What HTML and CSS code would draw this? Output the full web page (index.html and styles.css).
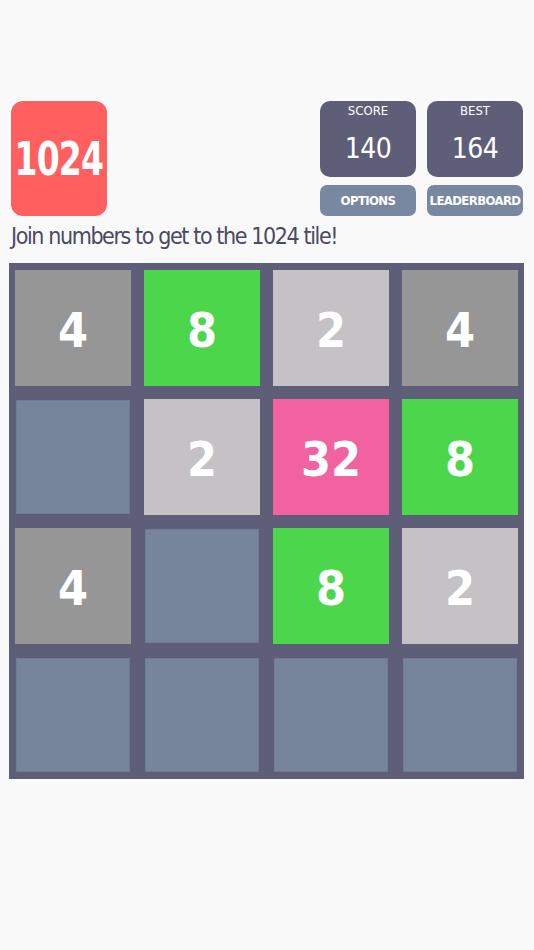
FILE: index.html
```html
<!DOCTYPE html>
<html lang="en">
<head>
<meta charset="UTF-8" />
<meta name="viewport" content="width=device-width, initial-scale=1" />
<title>1024</title>
<link rel="stylesheet" href="styles.css">
</head>
<body>
  <header class="top">
    <div class="logo"><span class="narrow">1024</span></div>
    <div class="panel">
      <div class="stat">
        <span class="stat-label">SCORE</span>
        <span class="stat-value">140</span>
      </div>
      <div class="stat">
        <span class="stat-label">BEST</span>
        <span class="stat-value">164</span>
      </div>
      <button class="btn">OPTIONS</button>
      <button class="btn">LEADERBOARD</button>
    </div>
  </header>

  <p class="tagline">Join numbers to get to the 1024 tile!</p>

  <main class="board">
    <div class="tile t4">4</div>
    <div class="tile t8">8</div>
    <div class="tile t2">2</div>
    <div class="tile t4">4</div>

    <div class="tile empty"></div>
    <div class="tile t2">2</div>
    <div class="tile t32">32</div>
    <div class="tile t8">8</div>

    <div class="tile t4">4</div>
    <div class="tile empty"></div>
    <div class="tile t8">8</div>
    <div class="tile t2">2</div>

    <div class="tile empty"></div>
    <div class="tile empty"></div>
    <div class="tile empty"></div>
    <div class="tile empty"></div>
  </main>
</body>
</html>
```

FILE: styles.css
```css
/* Reset */
* {
  box-sizing: border-box;
}
body {
  margin: 0;
  background: #f9f9f9;
  font-family: 'DejaVu Sans', sans-serif;
  font-stretch: condensed;
  font-weight: 700;
  color: #fff;
}

/* Header */
.top {
  display: flex;
  justify-content: space-between;
  padding: 101px 11px 0 11px;
}
.logo {
  width: 96px;
  height: 115px;
  background: #ff5f5f;
  border-radius: 12px;
  display: flex;
  align-items: center;
  justify-content: center;
  font-size: 47px;
}
.logo .narrow {
  display: inline-block;
  transform: scaleX(0.78);
  letter-spacing: -1px;
}
.panel {
  display: grid;
  grid-template-columns: 96px 96px;
  grid-template-rows: 76px 31px;
  column-gap: 11px;
  row-gap: 8px;
}
.stat {
  background: #5e5e78;
  border-radius: 10px;
  display: flex;
  flex-direction: column;
  align-items: center;
}
.stat-label {
  font-size: 13px;
  font-weight: 400;
  margin-top: 2px;
}
.stat-value {
  font-size: 28px;
  font-weight: 400;
  margin-top: 14px;
  letter-spacing: -0.5px;
}
.btn {
  border: none;
  background: #7888a0;
  color: #fff;
  border-radius: 7px;
  font-family: inherit;
  font-stretch: condensed;
  font-weight: 700;
  font-size: 13px;
  letter-spacing: -0.6px;
  padding: 0;
}

/* Tagline */
.tagline {
  margin: 7px 0 0 11px;
  height: 40px;
  font-size: 23px;
  letter-spacing: -1.4px;
  font-weight: 400;
  color: #4a4a62;
}

/* Board */
.board {
  margin-left: 9px;
  width: 515px;
  height: 516px;
  background: #5e5e78;
  padding: 7px 6px;
  display: grid;
  grid-template-columns: repeat(4, 116px);
  grid-auto-rows: 116px;
  gap: 13px;
}
.tile {
  display: flex;
  align-items: center;
  justify-content: center;
  font-size: 48px;
  padding-top: 4px;
}
.tile.empty {
  background: #76859c;
  border: 1px solid #6e7b95;
  margin: 1px;
}
.t2 { background: #c4c2c4; }
.t4 { background: #969696; }
.t8 { background: #4bd64c; }
.t32 { background: #f261a0; }
```
